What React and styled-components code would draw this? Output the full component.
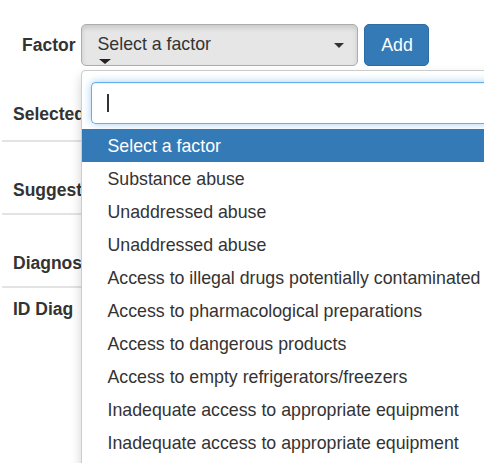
import React from "react";
import styled, { createGlobalStyle } from "styled-components";

const GlobalStyle = createGlobalStyle`
  html, body {
    margin: 0;
    padding: 0;
    overflow: hidden;
    background: #fff;
  }
  body {
    font-family: "Liberation Sans", Arial, Helvetica, sans-serif;
    color: #333;
  }
`;

const factors = [
  "Select a factor",
  "Substance abuse",
  "Unaddressed abuse",
  "Unaddressed abuse",
  "Access to illegal drugs potentially contaminated",
  "Access to pharmacological preparations",
  "Access to dangerous products",
  "Access to empty refrigerators/freezers",
  "Inadequate access to appropriate equipment",
  "Inadequate access to appropriate equipment",
];

const sections = [
  { title: "Selected", top: 38, bottom: 16, line: true },
  { title: "Suggested", top: 38, bottom: 13, line: true },
  { title: "Diagnoses", top: 38, bottom: 13, line: true },
  { title: "ID Diag", top: 11, bottom: 13, line: false },
];

const App = () => {
  return (
    <Page>
      <GlobalStyle />
      <FactorRow>
        <FactorLabel>Factor</FactorLabel>
        <SelectBox>
          <SelectText>Select a factor</SelectText>
          <SelectArrow />
          <OpenTip />
          <Dropdown>
            <SearchWrap>
              <SearchBox>
                <Caret />
              </SearchBox>
            </SearchWrap>
            <Results>
              {factors.map((factor, index) => (
                <Option key={index} $active={index === 0}>
                  {factor}
                </Option>
              ))}
            </Results>
          </Dropdown>
        </SelectBox>
        <AddButton>Add</AddButton>
      </FactorRow>

      <Sections>
        {sections.map((section) => (
          <Section
            key={section.title}
            $top={section.top}
            $bottom={section.bottom}
            $line={section.line}
          >
            <SectionTitle>{section.title}</SectionTitle>
          </Section>
        ))}
      </Sections>
    </Page>
  );
};

export default App;

const Page = styled.div`
  width: 484px;
  height: 463px;
  padding-top: 24px;
  box-sizing: border-box;
  overflow: hidden;
`;

const FactorRow = styled.div`
  display: flex;
  align-items: center;
  gap: 6px;
  padding-left: 22px;
  position: relative;
  z-index: 2;
`;

const FactorLabel = styled.label`
  font-size: 17.5px;
  font-weight: bold;
  color: #333;
`;

const SelectBox = styled.div`
  position: relative;
  width: 277px;
  height: 42px;
  box-sizing: border-box;
  display: flex;
  align-items: center;
  padding: 0 15px;
  background: #e6e6e6;
  border: 1px solid #adadad;
  border-radius: 5px;
  box-shadow: inset 0 3px 5px rgba(0, 0, 0, 0.125);
`;

const SelectText = styled.span`
  flex: 1;
  font-size: 17.75px;
  color: #333;
  margin-top: -1px;
`;

const SelectArrow = styled.span`
  width: 0;
  height: 0;
  margin-right: -2px;
  border-left: 5px solid transparent;
  border-right: 5px solid transparent;
  border-top: 5px solid #333;
`;

const OpenTip = styled.span`
  position: absolute;
  left: 17px;
  top: 34px;
  width: 0;
  height: 0;
  border-left: 6px solid transparent;
  border-right: 6px solid transparent;
  border-top: 5px solid #222;
`;

const Dropdown = styled.div`
  position: absolute;
  left: -1px;
  top: 45px;
  width: 440px;
  background: #fff;
  border: 1px solid #ccc;
  border-radius: 4px 0 0 0;
  box-shadow: 0 6px 12px rgba(0, 0, 0, 0.175);
`;

const SearchWrap = styled.div`
  padding: 11px 0 5px 9px;
`;

const SearchBox = styled.div`
  height: 42px;
  box-sizing: border-box;
  display: flex;
  align-items: center;
  padding-left: 15px;
  background: #fff;
  border: 1px solid #66afe9;
  border-right: none;
  border-radius: 5px 0 0 5px;
  box-shadow: inset 0 1px 1px rgba(0, 0, 0, 0.075),
    0 0 8px rgba(102, 175, 233, 0.6);
`;

const Caret = styled.span`
  width: 2px;
  height: 18px;
  background: #333;
`;

const Results = styled.ul`
  list-style: none;
  margin: 0;
  padding: 0 0 40px;
`;

const Option = styled.li`
  height: 33px;
  box-sizing: border-box;
  padding: 5px 25px 3px;
  font-size: 17.75px;
  line-height: 25px;
  white-space: nowrap;
  color: ${(p) => (p.$active ? "#fff" : "#333")};
  background: ${(p) => (p.$active ? "#337ab7" : "transparent")};
`;

const AddButton = styled.button`
  width: 65px;
  height: 42px;
  padding: 0;
  font-family: inherit;
  font-size: 17.75px;
  color: #fff;
  background: #337ab7;
  border: 1px solid #2e6da4;
  border-radius: 5px;
`;

const Sections = styled.div`
  display: flex;
  flex-direction: column;
  margin-left: 2px;
  width: 460px;
`;

const Section = styled.div`
  padding: ${(p) => p.$top}px 0 ${(p) => p.$bottom}px 11px;
  border-bottom: ${(p) => (p.$line ? "2px solid #e3e3e3" : "none")};
`;

const SectionTitle = styled.div`
  font-size: 17.5px;
  line-height: 20px;
  font-weight: bold;
  color: #333;
  white-space: nowrap;
`;
